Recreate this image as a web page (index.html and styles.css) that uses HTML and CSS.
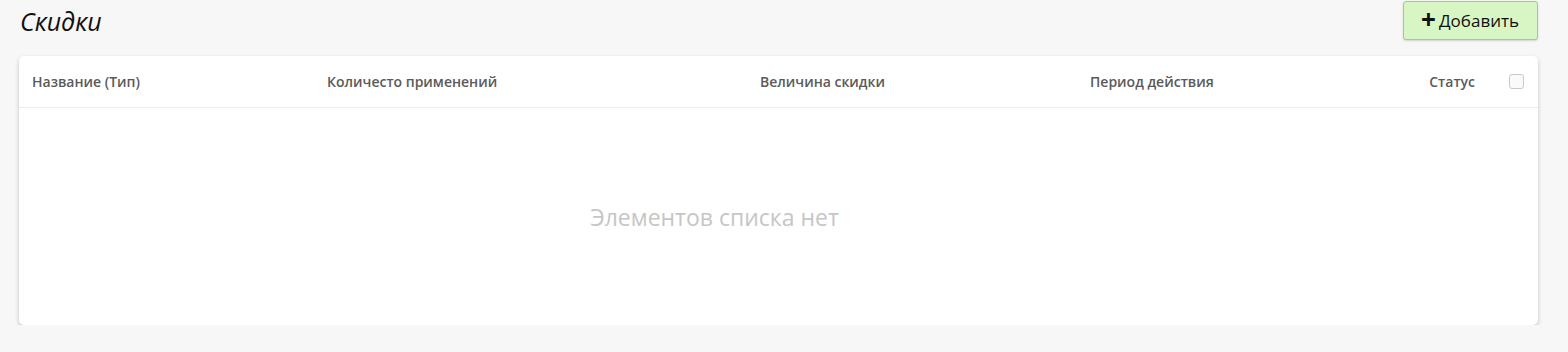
FILE: index.html
```html
<!DOCTYPE html>
<html>
	<head>
		<meta charset="utf-8">
		<link rel="stylesheet" href="styles.css">
	</head>
	<body>
		<div class="page-head">
			<h1 class="page-title">Скидки</h1>
			<button class="add-button"><span class="add-plus">+</span>Добавить</button>
		</div>
		<div class="card">
			<div class="table-head">
				<span class="col">Название (Тип)</span>
				<span class="col">Количесто применений</span>
				<span class="col">Величина скидки</span>
				<span class="col">Период действия</span>
				<span class="col col-status">Статус</span>
				<span class="check"></span>
			</div>
			<div class="empty">Элементов списка нет</div>
		</div>
	</body>
</html>
```

FILE: styles.css
```css
body {
	margin: 0;
	padding: 1px 30px 0 19px;
	background: #f7f7f7;
	font-family: 'Open Sans', 'Noto Sans', sans-serif;
}

.page-head {
	display: flex;
	align-items: center;
	justify-content: space-between;
	height: 39px;
}

.page-title {
	margin: 0 0 0 1px;
	font-size: 25px;
	font-weight: normal;
	font-style: italic;
	color: #111;
}

.add-button {
	display: flex;
	align-items: center;
	height: 39px;
	padding: 0 18px 0 17px;
	background: #d8f5c4;
	border: 1px solid #9ed27a;
	border-radius: 3px;
	box-shadow: 0 1px 2px rgba(0,0,0,0.15);
	font-family: inherit;
	font-size: 17px;
	color: #111;
}

.add-plus {
	font-size: 26px;
	font-weight: 700;
	line-height: 1;
	margin-right: 3px;
	margin-top: -3px;
}

.card {
	margin-top: 16px;
	background: #fff;
	border-radius: 5px;
	box-shadow: 0 2px 4px rgba(0,0,0,0.22);
	height: 269px;
	display: flex;
	flex-direction: column;
}

.table-head {
	display: grid;
	grid-template-columns: 295px 433px 330px 1fr auto auto;
	align-items: center;
	height: 51px;
	padding: 0 14px 0 13px;
	border-bottom: 1px solid #ececec;
	font-size: 14px;
	font-weight: 600;
	color: #5a5a5a;
}

.col-status {
	margin-right: 34px;
	text-align: right;
}

.check {
	width: 13px;
	height: 13px;
	border: 1px solid #c9c9c9;
	border-radius: 3px;
	background: #fafafa;
}

.empty {
	flex: 1;
	display: flex;
	align-items: center;
	justify-content: center;
	padding-right: 128px;
	font-size: 23px;
	color: #c6c6c6;
}
```
